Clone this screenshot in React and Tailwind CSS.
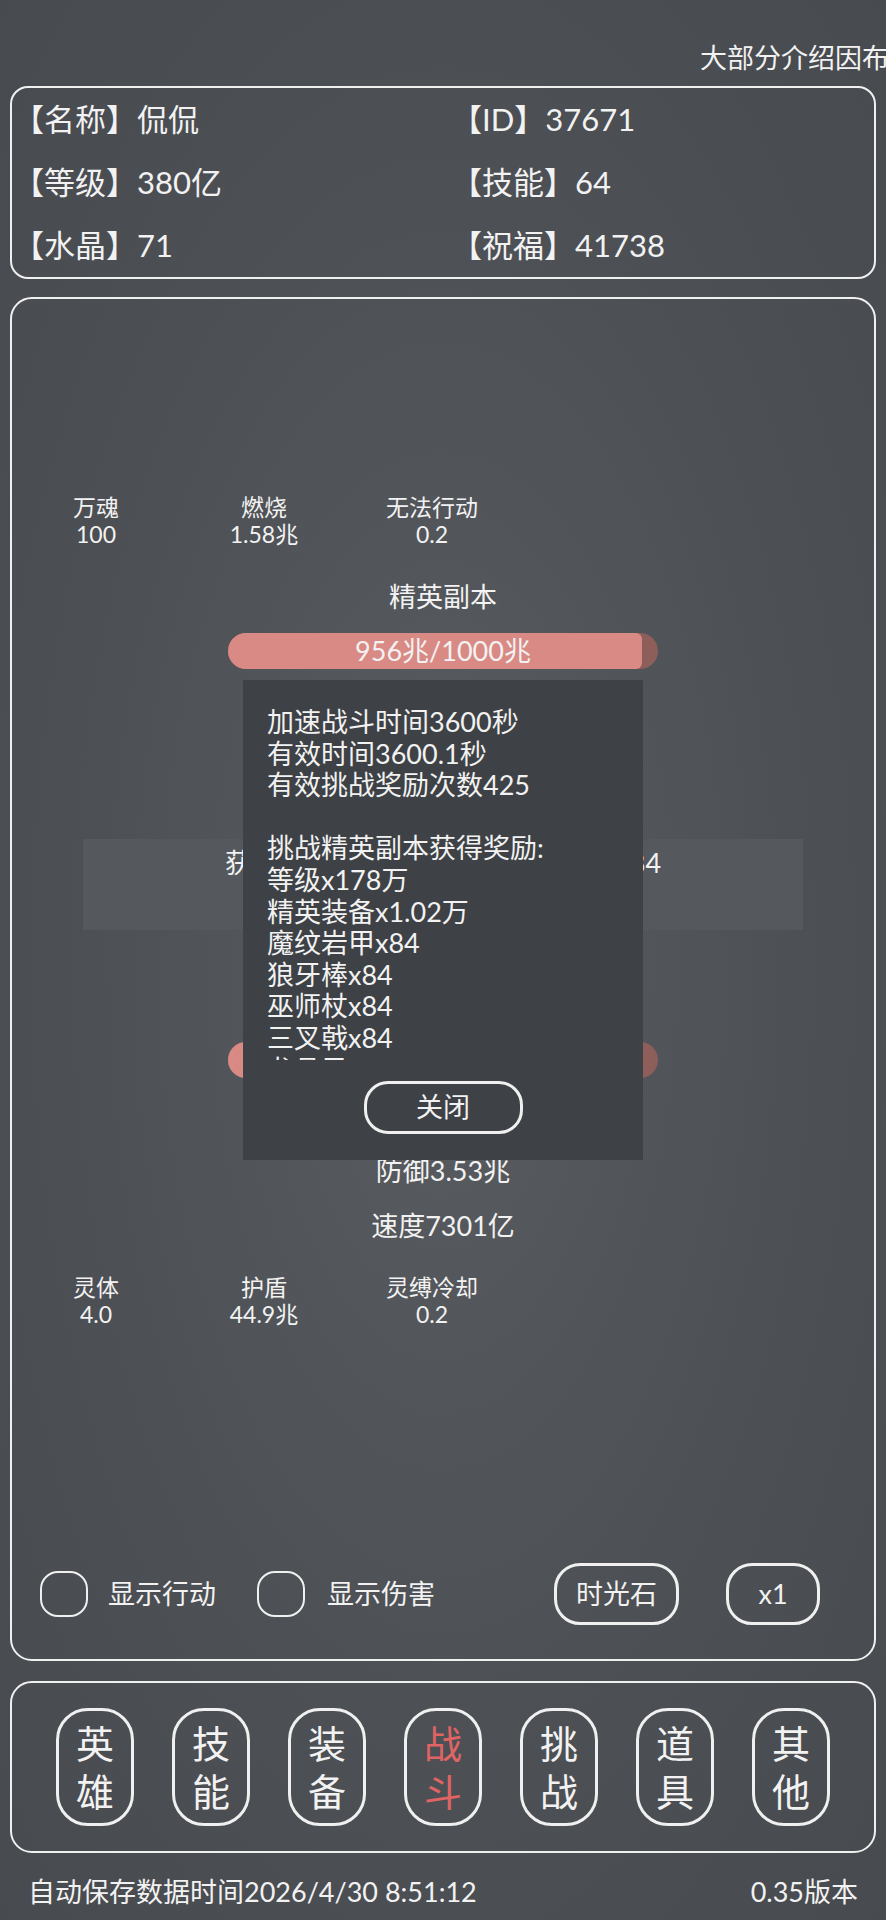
import { useState } from 'react';

const topInfo = [
  ['【名称】侃侃', '【ID】37671'],
  ['【等级】380亿', '【技能】64'],
  ['【水晶】71', '【祝福】41738'],
];

const enemyBuffs = [
  { name: '万魂', val: '100' },
  { name: '燃烧', val: '1.58兆' },
  { name: '无法行动', val: '0.2' },
];

const heroBuffs = [
  { name: '灵体', val: '4.0' },
  { name: '护盾', val: '44.9兆' },
  { name: '灵缚冷却', val: '0.2' },
];

const rewards = [
  '加速战斗时间3600秒',
  '有效时间3600.1秒',
  '有效挑战奖励次数425',
  '',
  '挑战精英副本获得奖励:',
  '等级x178万',
  '精英装备x1.02万',
  '魔纹岩甲x84',
  '狼牙棒x84',
  '巫师杖x84',
  '三叉戟x84',
  '龙骨弓x84',
  '秘银锤x84',
];

const tabs = ['英雄', '技能', '装备', '战斗', '挑战', '道具', '其他'];

function BuffRow({ items }) {
  return (
    <div className="grid grid-cols-[168px_168px_168px] text-[23px] leading-[27px] text-center">
      {items.map(b => (
        <div key={b.name}>
          <div>{b.name}</div>
          <div>{b.val}</div>
        </div>
      ))}
    </div>
  );
}

function HpBar({ text, pct }) {
  return (
    <div className="relative mx-auto w-[430px] h-[36px] rounded-full bg-[#8e5e5b] overflow-hidden">
      <div className="h-full bg-[#d98a84] rounded-r-[6px]" style={{ width: pct + '%' }} />
      <div className="absolute inset-0 flex items-center justify-center text-[27px] leading-[36px]">{text}</div>
    </div>
  );
}

export default function App() {
  const [showAct, setShowAct] = useState(false);
  const [showDmg, setShowDmg] = useState(false);
  const [open, setOpen] = useState(true);
  const [tab, setTab] = useState('战斗');

  return (
    <div className="relative h-[1920px] overflow-hidden flex flex-col text-[#f2f2f2] font-['Lato','Noto_Sans_CJK_SC',sans-serif] bg-[radial-gradient(ellipse_at_50%_50%,#595c60_0%,#4d5054_55%,#474a4e_100%)]">
      {/* scrolling notice */}
      <div className="h-[86px] overflow-hidden whitespace-nowrap pl-[700px] pt-[42px] text-[27px] leading-[32px]">
        大部分介绍因布局原因显示不全，请点击查看详细说明
      </div>

      {/* player info */}
      <div className="mx-[10px] h-[193px] border-2 border-[#f0f0f0] rounded-[18px] grid grid-cols-[438px_1fr] grid-rows-3 text-[31px]">
        {topInfo.map(([a, b]) => (
          <div key={a} className="contents">
            <div className="flex items-center pl-[1px]">{a}</div>
            <div className="flex items-center pl-[1px]">{b}</div>
          </div>
        ))}
      </div>

      {/* battle panel */}
      <div className="mt-[18px] mx-[10px] h-[1364px] border-2 border-[#f0f0f0] rounded-[22px] flex flex-col">
        <div className="mt-[195px]">
          <BuffRow items={enemyBuffs} />
        </div>
        <div className="mt-[33px] text-center text-[27px] leading-[32px]">精英副本</div>
        <div className="mt-[20px]">
          <HpBar text="956兆/1000兆" pct={96.3} />
        </div>

        <div className="mt-[170px] mx-auto w-[720px] h-[91px] bg-[#55595d] pt-[8px] text-center text-[27px] leading-[32px]">
          获得奖励：等级x178万 精英装备x84
        </div>

        <div className="mt-[112px]">
          <HpBar text="1.24京/1.24京" pct={96} />
        </div>
        <div className="mt-[10px] text-center text-[27px] leading-[55px]">
          <div>攻击2.86兆</div>
          <div>防御3.53兆</div>
          <div>速度7301亿</div>
        </div>
        <div className="mt-[21px]">
          <BuffRow items={heroBuffs} />
        </div>

        <div className="mt-auto mb-[34px] h-[62px] flex items-center text-[27px]">
          <button
            onClick={() => setShowAct(!showAct)}
            className={'ml-[28px] w-[48px] h-[46px] border-2 border-[#f0f0f0] rounded-[18px] ' + (showAct ? 'bg-[#f0f0f0]' : '')}
          />
          <span className="ml-[20px]">显示行动</span>
          <button
            onClick={() => setShowDmg(!showDmg)}
            className={'ml-[41px] w-[48px] h-[46px] border-2 border-[#f0f0f0] rounded-[18px] ' + (showDmg ? 'bg-[#f0f0f0]' : '')}
          />
          <span className="ml-[22px]">显示伤害</span>
          <button className="ml-[119px] w-[125px] h-[62px] border-[3px] border-[#f0f0f0] rounded-[26px]">时光石</button>
          <button className="ml-[47px] w-[94px] h-[62px] border-[3px] border-[#f0f0f0] rounded-[26px]">x1</button>
        </div>
      </div>

      {/* tabs */}
      <div className="mt-[20px] mx-[10px] h-[172px] border-2 border-[#f0f0f0] rounded-[22px] flex items-center justify-center gap-[38px]">
        {tabs.map(t => (
          <button
            key={t}
            onClick={() => setTab(t)}
            className={'w-[78px] h-[118px] border-[3px] border-[#f0f0f0] rounded-[32px] flex flex-col items-center justify-center text-[38px] leading-[48px] ' + (tab === t ? 'text-[#e06464]' : '')}
          >
            <span>{t[0]}</span>
            <span>{t[1]}</span>
          </button>
        ))}
      </div>

      <div className="pt-[23px] px-[28px] flex justify-between text-[27px] leading-[32px]">
        <span>自动保存数据时间2026/4/30 8:51:12</span>
        <span>0.35版本</span>
      </div>

      {/* result dialog */}
      {open && (
        <div className="absolute left-[243px] top-[680px] w-[400px] h-[480px] bg-[#3e4145] flex flex-col">
          <div className="h-[380px] overflow-hidden pt-[26px] pl-[24px] text-[27px] leading-[31.6px]">
            {rewards.map((r, i) => (
              <div key={i} className="h-[31.6px] whitespace-nowrap">{r}</div>
            ))}
          </div>
          <button
            onClick={() => setOpen(false)}
            className="mt-[21px] mx-auto w-[159px] h-[53px] border-[3px] border-[#f0f0f0] rounded-[24px] text-[27px]"
          >
            关闭
          </button>
        </div>
      )}
    </div>
  );
}
